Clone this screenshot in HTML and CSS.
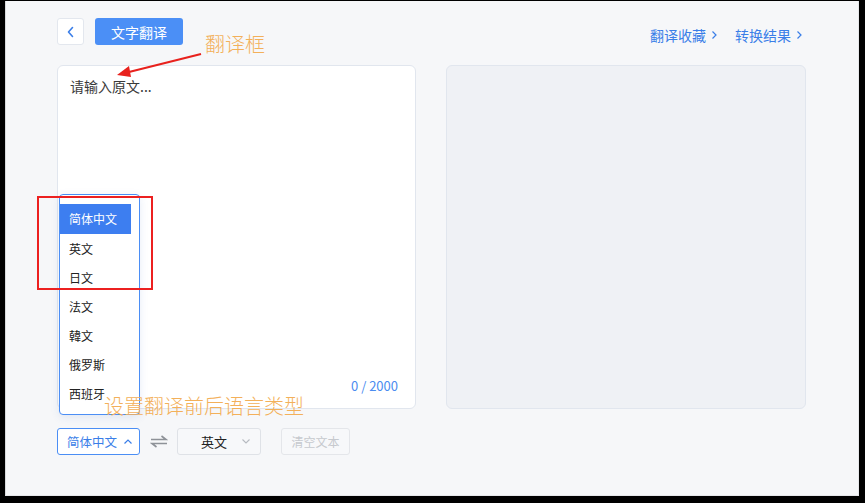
FILE: index.html
```html
<!DOCTYPE html>
<html lang="zh">
<head>
<meta charset="utf-8">
<title>文字翻译</title>
<link rel="stylesheet" href="styles.css">
</head>
<body>
<div class="frame">
  <header class="top">
    <div class="left-tools">
      <button class="back" aria-label="返回">
        <svg width="10" height="12" viewBox="0 0 10 12"><path d="M6.5 1.5 L2.5 6 L6.5 10.5" fill="none" stroke="#3a7ee8" stroke-width="1.6" stroke-linecap="round" stroke-linejoin="round"/></svg>
      </button>
      <button class="title-btn">文字翻译</button>
    </div>
    <nav class="links">
      <a class="link">翻译收藏<svg width="7" height="10" viewBox="0 0 7 10"><path d="M1.5 1.5 L5 5 L1.5 8.5" fill="none" stroke="#3a7ee8" stroke-width="1.2"/></svg></a>
      <a class="link">转换结果<svg width="7" height="10" viewBox="0 0 7 10"><path d="M1.5 1.5 L5 5 L1.5 8.5" fill="none" stroke="#3a7ee8" stroke-width="1.2"/></svg></a>
    </nav>
  </header>

  <main class="panels">
    <section class="panel source">
      <div class="placeholder">请输入原文...</div>
      <div class="count">0 / 2000</div>
    </section>
    <section class="panel result"></section>
  </main>

  <footer class="controls">
    <div class="select active">
      <span>简体中文</span>
      <svg width="10" height="7" viewBox="0 0 10 7"><path d="M1.5 5.5 L5 2 L8.5 5.5" fill="none" stroke="#3a7ee8" stroke-width="1.2"/></svg>
    </div>
    <svg class="swap" width="18" height="13" viewBox="0 0 18 13"><path d="M1 4.5 H16 L11.5 1" fill="none" stroke="#8e9298" stroke-width="1.6"/><path d="M17 8.5 H2 L6.5 12" fill="none" stroke="#8e9298" stroke-width="1.6"/></svg>
    <div class="select plain">
      <span>英文</span>
      <svg width="10" height="7" viewBox="0 0 10 7"><path d="M1.5 1.5 L5 5 L8.5 1.5" fill="none" stroke="#b6bac0" stroke-width="1.1"/></svg>
    </div>
    <button class="clear" disabled>清空文本</button>
  </footer>

  <ul class="dropdown">
    <li class="on">简体中文</li>
    <li>英文</li>
    <li>日文</li>
    <li>法文</li>
    <li>韓文</li>
    <li>俄罗斯</li>
    <li>西班牙</li>
  </ul>

  <div class="redbox"></div>
  <svg class="arrow" width="90" height="30" viewBox="0 0 90 30">
    <line x1="86" y1="3" x2="10" y2="22" stroke="#e8211d" stroke-width="2"/>
    <polygon points="2,24 14,15 16,26" fill="#e8211d"/>
  </svg>
  <div class="note note-box">翻译框</div>
  <div class="note note-lang">设置翻译前后语言类型</div>
</div>
</body>
</html>
```

FILE: styles.css
```css
* { box-sizing: border-box; }
html, body { margin: 0; padding: 0; }
body {
  background: #000;
  width: 865px;
  height: 503px;
  overflow: hidden;
  font-family: "Noto Sans CJK SC", "Noto Sans", sans-serif;
}
.frame {
  position: relative;
  margin: 1px 0 0 5px;
  width: 854px;
  height: 495px;
  background: #f6f7f9;
  border-left: 1px solid #d9dadc;
  border-right: 1px solid #e6e7ea;
  border-bottom: 1px solid #e6e7ea;
  padding: 17px 52px 0 51px;
}
.top {
  display: flex;
  justify-content: space-between;
  align-items: flex-start;
  height: 27px;
}
.left-tools { display: flex; gap: 11px; }
.back {
  width: 27px;
  height: 27px;
  background: #fff;
  border: 1px solid #e3e7ee;
  border-radius: 3px;
  padding: 0;
  display: flex;
  align-items: center;
  justify-content: center;
}
.title-btn {
  width: 88px;
  height: 27px;
  background: #4b8ff6;
  color: #fff;
  border: none;
  border-radius: 3px;
  font-family: inherit;
  font-size: 14px;
  padding: 0;
}
.links {
  display: flex;
  gap: 17px;
  padding-top: 7px;
  padding-right: 3px;
}
.link {
  display: flex;
  align-items: center;
  gap: 5px;
  color: #3a7ee8;
  font-size: 14px;
  line-height: 20px;
}
.panels {
  display: flex;
  gap: 30px;
  margin-top: 20px;
}
.panel {
  flex: none;
  height: 344px;
  border: 1px solid #e1e6ee;
  border-radius: 6px;
}
.source {
  width: 359px;
  background: #fff;
  display: flex;
  flex-direction: column;
  justify-content: space-between;
  padding: 10px 17px 12px 12px;
}
.placeholder { font-size: 14px; line-height: 20px; color: #3a3a3a; }
.count {
  align-self: flex-end;
  font-size: 13px;
  line-height: 20px;
  color: #4b8cf0;
}
.result {
  width: 360px;
  background: #eff1f5;
}
.controls {
  display: flex;
  align-items: center;
  margin-top: 19px;
  height: 27px;
}
.select {
  height: 27px;
  display: flex;
  align-items: center;
  border-radius: 3px;
  font-size: 13px;
}
.select.active {
  width: 83px;
  border: 1px solid #4b8ef5;
  background: #fff;
  color: #3a7ee8;
  font-size: 12.5px;
  padding: 0 6px 0 9px;
  justify-content: space-between;
}
.swap { margin: 0 9px 0 10px; }
.select.plain {
  width: 84px;
  border: 1px solid #dfe2e7;
  background: #f7f8fa;
  color: #222;
  padding: 0 9px 0 23px;
  justify-content: space-between;
}
.clear {
  margin-left: 20px;
  width: 69px;
  height: 27px;
  border: 1px solid #e4e6ea;
  border-radius: 3px;
  background: #f7f8fa;
  color: #c6c9ce;
  font-family: inherit;
  font-size: 12px;
  padding: 0;
}
.dropdown {
  position: absolute;
  left: 53px;
  top: 193px;
  width: 81px;
  height: 221px;
  margin: 0;
  padding: 9px 8px 0 0;
  list-style: none;
  background: #fff;
  border: 1px solid #4b8ef5;
  border-radius: 4px;
  box-shadow: 0 2px 8px rgba(60, 110, 200, 0.12);
}
.dropdown li {
  height: 29px;
  line-height: 29px;
  padding-left: 9px;
  font-size: 12px;
  color: #222;
}
.dropdown li.on {
  height: 30px;
  line-height: 30px;
  background: #3d7ef0;
  color: #fff;
}
.redbox {
  position: absolute;
  left: 31px;
  top: 195px;
  width: 116px;
  height: 94px;
  border: 2px solid #ec2020;
}
.arrow {
  position: absolute;
  left: 109px;
  top: 50px;
}
.note {
  position: absolute;
  color: #f3b05a;
  font-size: 20px;
  font-weight: 300;
  line-height: 24px;
  white-space: nowrap;
}
.note-box { left: 199px; top: 31px; }
.note-lang { left: 98px; top: 393px; }
```
